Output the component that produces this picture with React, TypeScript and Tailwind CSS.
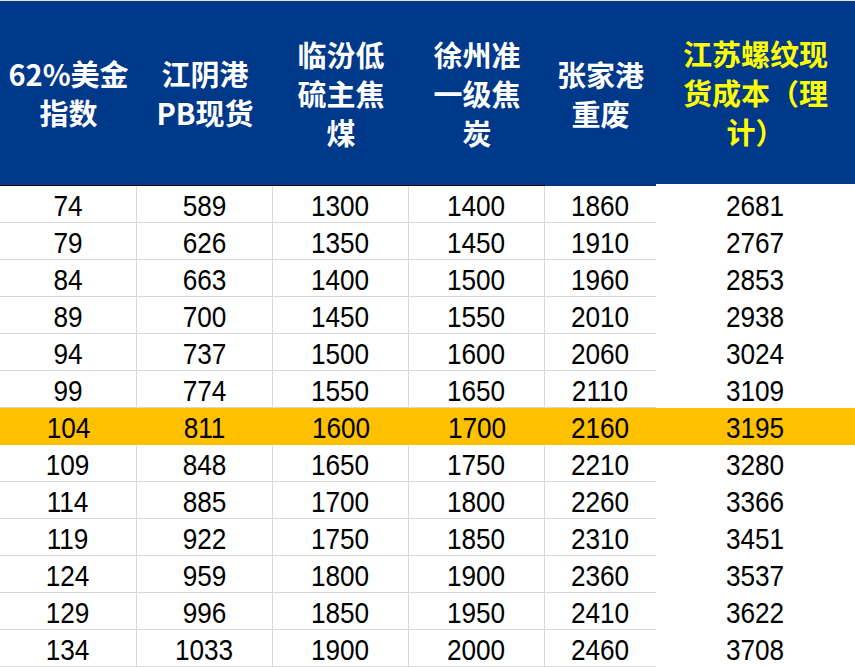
import React from "react"

const headers = [
  { lines: ["62%美金", "指数"], w: "w-[137px]", yellow: false, line: true },
  { lines: ["江阴港", "PB现货"], w: "w-[136px]", yellow: false, line: true },
  { lines: ["临汾低", "硫主焦", "煤"], w: "w-[136px]", yellow: false, line: true },
  { lines: ["徐州准", "一级焦", "炭"], w: "w-[136px]", yellow: false, line: true },
  { lines: ["张家港", "重废"], w: "w-[111px]", yellow: false, line: false },
  { lines: ["江苏螺纹现", "货成本（理", "计）"], w: "w-[199px]", yellow: true, line: false },
]

const rows = [
  [74, 589, 1300, 1400, 1860, 2681],
  [79, 626, 1350, 1450, 1910, 2767],
  [84, 663, 1400, 1500, 1960, 2853],
  [89, 700, 1450, 1550, 2010, 2938],
  [94, 737, 1500, 1600, 2060, 3024],
  [99, 774, 1550, 1650, 2110, 3109],
  [104, 811, 1600, 1700, 2160, 3195],
  [109, 848, 1650, 1750, 2210, 3280],
  [114, 885, 1700, 1800, 2260, 3366],
  [119, 922, 1750, 1850, 2310, 3451],
  [124, 959, 1800, 1900, 2360, 3537],
  [129, 996, 1850, 1950, 2410, 3622],
  [134, 1033, 1900, 2000, 2460, 3708],
]

const widths = ["w-[137px]", "w-[136px]", "w-[136px]", "w-[136px]", "w-[111px]", "w-[199px]"]

export default function App() {
  return (
    <div className="w-[855px] h-[667px] overflow-hidden bg-white">
      {/* Header */}
      <div className="flex h-[186px] border-t border-[#e5e5e5]">
        {headers.map((h, i) => (
          <div
            key={i}
            className={`${h.w} flex items-center justify-center bg-[#00388a] ${
              h.line ? "border-b border-black" : i === 5 ? "border-b-2 border-white" : ""
            }`}
          >
            <div
              className={`text-center font-bold text-[29px] leading-[39px] ${
                h.yellow ? "text-[#ffff00]" : "text-white"
              } [font-family:'Noto_Sans_CJK_SC',sans-serif]`}
            >
              {h.lines.map((l, j) => (
                <div key={j}>{l}</div>
              ))}
            </div>
          </div>
        ))}
      </div>

      {/* Body */}
      <div className="[font-family:'Liberation_Sans',Arial,sans-serif] text-[27px] text-black">
        {rows.map((r, ri) => {
          const hl = ri === 6
          return (
            <div key={ri} className={`flex h-[37px] ${hl ? "bg-[#ffc000]" : ""}`}>
              {r.map((v, ci) => (
                <div
                  key={ci}
                  className={`${widths[ci]} flex items-center justify-center ${
                    ci < 5 && !hl ? "border-b border-[#d9d9d9]" : ""
                  } ${ci < 4 && !hl ? "border-r border-[#d9d9d9]" : ""}`}
                >
                  <span className="inline-block translate-y-[2px] scale-y-[1.08] scale-x-[0.97]">{v}</span>
                </div>
              ))}
            </div>
          )
        })}
      </div>
    </div>
  )
}
